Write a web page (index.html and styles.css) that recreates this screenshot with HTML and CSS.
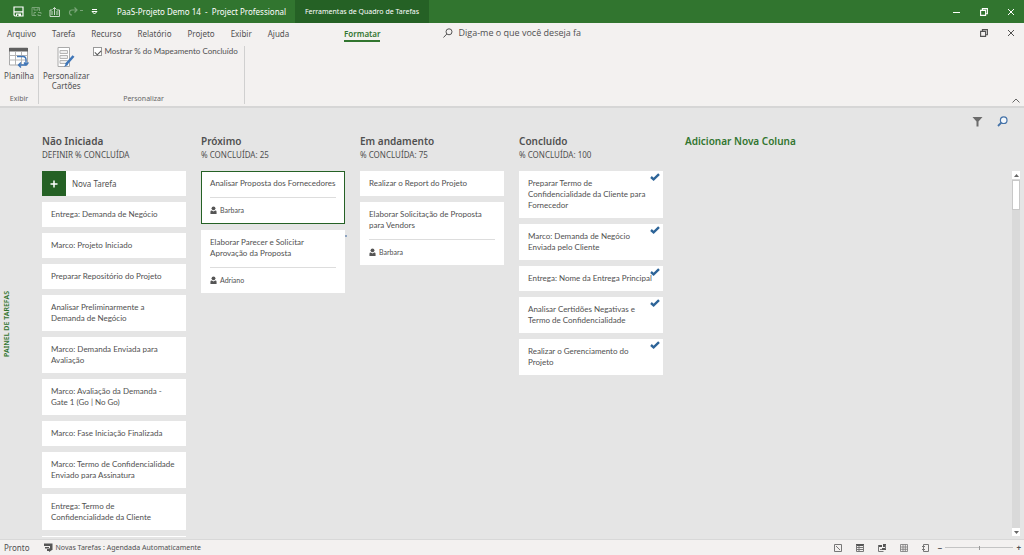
FILE: index.html
```html
<!DOCTYPE html>
<html lang="pt-BR">
<head>
<meta charset="utf-8">
<title>PaaS-Projeto Demo 14 - Project Professional</title>
<link rel="stylesheet" href="styles.css">
</head>
<body>
<svg class="defs" aria-hidden="true">
  <symbol id="person" viewBox="0 0 8 10"><circle cx="4" cy="2.500" r="2.200"/><path d="M.5 9V6.300Q.5 4.800 2.200 5L4 6 5.800 5Q7.500 4.800 7.500 6.300V9z"/></symbol>
  <symbol id="check" viewBox="0 0 10 8"><path d="M1 4 3.600 6.300 9 1.200" fill="none" stroke="#2d6498" stroke-width="2.400"/></symbol>
  <symbol id="restore" viewBox="0 0 8 8"><path d="M.6 2.400H5.600V7.400H.6zM2.400 2V.6H7.400V5.800H6" fill="none" stroke="currentColor" stroke-width="1.100"/></symbol>
  <symbol id="close" viewBox="0 0 8 8"><path d="M1 1 7 7M7 1 1 7" fill="none" stroke="currentColor"/></symbol>
</svg>
<header class="titlebar">
  <div class="quick">
    <button aria-label="Salvar"><svg width="11" height="11" viewBox="0 0 11 11"><path d="M1 1H10V10H2L1 9z" fill="none" stroke="#fff" stroke-width="1.200"/><path d="M1 5.200H10V6.500H1zM3 7.500H8V10H3z" fill="#fff"/><path d="M4 8.500H5.500V10H4z" fill="#31752f"/></svg></button>
    <button class="dim" aria-label="Salvar como"><svg width="11" height="11" viewBox="0 0 11 11" fill="none" stroke="#fff"><path d="M5 9.500H1V1.500H8.500V5M3 1.500V4H7V1.500M3 9V6.500H5M7 6.500H10V8M10 9.500H7V8"/></svg></button>
    <button class="soft" aria-label="Desfazer"><svg width="12" height="12" viewBox="0 0 12 12" fill="none" stroke="#fff"><path d="M3 4H1V10.500H10.500V4H8M5.500 9V1.500M3.500 3.500 5.500 1.500 7.500 3.500M2 6H4M7 6H9.500M2 8H4M7 8H9.500"/></svg></button>
    <button class="dim" aria-label="Refazer"><svg width="16" height="11" viewBox="0 0 16 11" fill="none" stroke="#fff"><path d="M9 4H4Q1.500 4 1.500 6.500T4 9M6.500 1.500 9 4 6.500 6.500M12 4.500H15" stroke-width="1.200"/></svg></button>
    <button aria-label="Personalizar acesso rápido"><svg width="7" height="6" viewBox="0 0 7 6" fill="none" stroke="#fff"><path d="M1 .5H6M1 2.500H6L3.500 5z"/></svg></button>
  </div>
  <span class="doc">PaaS-Projeto Demo 14 &nbsp;- &nbsp;Project Professional</span>
  <span class="context">Ferramentas de Quadro de Tarefas</span>
  <div class="winbtns">
    <button aria-label="Minimizar"><svg width="8" height="8"><path d="M0 4.500H7" stroke="currentColor"/></svg></button>
    <button aria-label="Restaurar"><svg width="8" height="8"><use href="#restore"/></svg></button>
    <button aria-label="Fechar"><svg width="8" height="8"><use href="#close"/></svg></button>
  </div>
</header>

<section class="ribbon">
  <div class="tabrow">
    <nav class="tabs">
      <a href="#">Arquivo</a><a href="#">Tarefa</a><a href="#">Recurso</a><a href="#">Relatório</a><a href="#">Projeto</a><a href="#">Exibir</a><a href="#">Ajuda</a>
    </nav>
    <a class="active" href="#">Formatar</a>
    <label class="tell"><svg width="10" height="10" viewBox="0 0 10 10" fill="none" stroke="#555"><circle cx="6" cy="3.800" r="3"/><path d="M3.800 6 .5 9.500"/></svg><input type="text" value="Diga-me o que você deseja fa" aria-label="Diga-me o que você deseja fazer"></label>
    <div class="winbtns">
      <button aria-label="Restaurar projeto"><svg width="8" height="8"><use href="#restore"/></svg></button>
      <button aria-label="Fechar projeto"><svg width="8" height="8"><use href="#close"/></svg></button>
    </div>
  </div>
  <div class="groups">
    <div class="group group-view">
      <button class="tool"><svg width="20" height="21" viewBox="0 0 20 21"><path d="M.5 1H18.500V18H.5z" fill="#fff" stroke="#aaa"/><path d="M0 1H19V4.500H0z" fill="#606060"/><path d="M.5 8.500H18.500M.5 13H18.500M6.500 5V18M12.500 5V18" stroke="#b5b5b5"/><path d="M8 9.500H14Q17 9.500 17 13V18H10M12 15.500 9.500 18 12 20.500M15 15.500 17 18 19.500 15.500" fill="none" stroke="#3f76b8" stroke-width="1.400"/></svg><span>Planilha</span></button>
      <span class="caption">Exibir</span>
    </div>
    <div class="group group-custom">
      <div class="tools">
        <button class="tool"><svg width="18" height="21" viewBox="0 0 18 21"><path d="M1 .5H12.500V19.500H1z" fill="#fff" stroke="#aaa"/><path d="M3 3.500H10.500V6.500H3zM3 8.500H10.500V11.500H3zM3 13.500H10.500V16.500H3z" fill="#eee" stroke="#b5b5b5"/><path d="M16.500 9 9 17.500" stroke="#3f76b8" stroke-width="2.600"/><path d="M9.500 15.500 7 20 11 18z" fill="#3f76b8"/></svg><span>Personalizar<br>Cartões</span></button>
        <label class="option"><input type="checkbox" checked>Mostrar % do Mapeamento Concluído</label>
      </div>
      <span class="caption">Personalizar</span>
    </div>
    <button class="collapse" aria-label="Recolher faixa"><svg width="8" height="5" viewBox="0 0 8 5"><path d="M.5 4.500 4 1 7.500 4.500" fill="none" stroke="#666"/></svg></button>
  </div>
</section>

<main class="workspace">
  <div class="pane"><span>PAINEL DE TAREFAS</span></div>
  <div class="board">
    <div class="boardtools">
      <button aria-label="Filtrar"><svg width="11" height="11" viewBox="0 0 11 11"><path d="M.5 1H10.500L6.500 5.500V10.500H4.500V5.500z" fill="#6c6c6c"/></svg></button>
      <button aria-label="Localizar"><svg width="11" height="11" viewBox="0 0 11 11"><circle cx="6.700" cy="4.200" r="3.300" fill="#f3f7fb" stroke="#4472a8" stroke-width="1.200"/><path d="M4.300 6.600 1 10" stroke="#4472a8" stroke-width="1.800"/></svg></button>
    </div>
    <div class="columns">
      <section class="column">
        <h2>Não Iniciada</h2><p class="sub">DEFINIR % CONCLUÍDA</p>
        <button class="new"><span class="plus"><svg width="8" height="8" viewBox="0 0 8 8"><path d="M4 .5V7.500M.5 4H7.500" stroke="#fff" stroke-width="1.500"/></svg></span>Nova Tarefa</button>
        <article class="card">Entrega: Demanda de Negócio</article>
        <article class="card">Marco: Projeto Iniciado</article>
        <article class="card">Preparar Repositório do Projeto</article>
        <article class="card">Analisar Preliminarmente a<br>Demanda de Negócio</article>
        <article class="card">Marco: Demanda Enviada para<br>Avaliação</article>
        <article class="card">Marco: Avaliação da Demanda -<br>Gate 1 (Go | No Go)</article>
        <article class="card">Marco: Fase Iniciação Finalizada</article>
        <article class="card">Marco: Termo de Confidencialidade<br>Enviado para Assinatura</article>
        <article class="card">Entrega: Termo de<br>Confidencialidade da Cliente</article>
        <article class="card">&nbsp;</article>
      </section>
      <section class="column">
        <h2>Próximo</h2><p class="sub">% CONCLUÍDA: 25</p>
        <article class="card selected">Analisar Proposta dos Fornecedores<p class="who"><svg width="7" height="9"><use href="#person"/></svg>Barbara</p></article>
        <article class="card">Elaborar Parecer e Solicitar<br>Aprovação da Proposta<p class="who"><svg width="7" height="9"><use href="#person"/></svg>Adriano</p><i class="speck"></i></article>
      </section>
      <section class="column">
        <h2>Em andamento</h2><p class="sub">% CONCLUÍDA: 75</p>
        <article class="card">Realizar o Report do Projeto</article>
        <article class="card">Elaborar Solicitação de Proposta<br>para Vendors<p class="who"><svg width="7" height="9"><use href="#person"/></svg>Barbara</p></article>
      </section>
      <section class="column">
        <h2>Concluído</h2><p class="sub">% CONCLUÍDA: 100</p>
        <article class="card">Preparar Termo de<br>Confidencialidade da Cliente para<br>Fornecedor<svg class="done" width="10" height="8"><use href="#check"/></svg></article>
        <article class="card">Marco: Demanda de Negócio<br>Enviada pelo Cliente<svg class="done" width="10" height="8"><use href="#check"/></svg></article>
        <article class="card">Entrega: Nome da Entrega Principal<svg class="done" width="10" height="8"><use href="#check"/></svg></article>
        <article class="card">Analisar Certidões Negativas e<br>Termo de Confidencialidade<svg class="done" width="10" height="8"><use href="#check"/></svg></article>
        <article class="card">Realizar o Gerenciamento do<br>Projeto<svg class="done" width="10" height="8"><use href="#check"/></svg></article>
      </section>
      <button class="addcol">Adicionar Nova Coluna</button>
      <div class="scroll">
        <button aria-label="Rolar para cima"><svg width="5" height="3"><path d="M0 3 2.500 0 5 3z"/></svg></button>
        <div class="thumb"></div>
        <button class="down" aria-label="Rolar para baixo"><svg width="5" height="3"><path d="M0 0 2.500 3 5 0z"/></svg></button>
      </div>
    </div>
  </div>
</main>

<footer class="status">
  <span>Pronto</span>
  <button class="mode"><svg width="9" height="9" viewBox="0 0 9 9"><path d="M0 .5H8.500V5H6V3H0zM1 4H5V5.500H1z" fill="#555"/><path d="M3 6H5V5L8 7 5 9V8H3z" fill="#555"/><path d="M6 5H8.500V7H6z" fill="#555"/></svg>Novas Tarefas : Agendada Automaticamente</button>
  <div class="views">
    <button aria-label="Gantt"><svg width="8" height="8" viewBox="0 0 8 8"><path d="M.5 .5H7.500V7.500H.5zM2 2 6 6" fill="none" stroke="#777"/></svg></button>
    <button aria-label="Uso da tarefa"><svg width="8" height="8" viewBox="0 0 8 8"><path d="M0 0H8V2H0z" fill="#555"/><path d="M.5 1V7.500H7.500V1M.5 3.500H7.500M.5 5.500H7.500M3 2V7.500" fill="none" stroke="#777"/></svg></button>
    <button aria-label="Planejador de equipe"><svg width="8" height="8" viewBox="0 0 8 8"><path d="M0 1H4V3H0zM5 0H8V3H5zM4 4H8V6H4z" fill="#555"/><path d="M.5 1V7.500H5.500M2 5.500H4M7.500 1V5" fill="none" stroke="#777"/></svg></button>
    <button aria-label="Planilha de recursos"><svg width="8" height="8" viewBox="0 0 8 8"><path d="M.5 .5H7.500V7.500H.5zM.5 3H7.500M.5 5.300H7.500M3 .5V7.500M5.300 .5V7.500" fill="none" stroke="#777" stroke-width=".8"/></svg></button>
    <button aria-label="Relatório"><svg width="8" height="8" viewBox="0 0 8 8"><path d="M1.500 .5H6.500V7.500H1.500zM0 2.500H3M0 5.500H3" fill="none" stroke="#777"/></svg></button>
  </div>
  <label class="zoom"><span>−</span><input type="range" min="0" max="100" value="50" aria-label="Zoom"><span>+</span></label>
</footer>
</body>
</html>
```
FILE: styles.css
```css
* { box-sizing: border-box; }
body {
  margin: 0;
  height: 100vh;
  display: flex;
  flex-direction: column;
  overflow: hidden;
  background: #e5e5e5;
  color: #505050;
  font: 8px/11px "Noto Sans", "Open Sans", sans-serif;
}
button, input { font: inherit; color: inherit; }
button { border: 0; padding: 0; background: none; display: flex; align-items: center; justify-content: center; }
a { color: inherit; text-decoration: none; }
h2, p { margin: 0; }
svg { display: block; flex: none; }
.defs { position: absolute; width: 0; height: 0; }

.titlebar { display: flex; flex: none; height: 23px; align-items: center; background: #31752f; color: #fff; }
.quick { display: flex; align-items: center; gap: 7px; width: 117px; padding-left: 13px; flex: none; }
.dim { opacity: .35; }
.soft { opacity: .75; }
.doc { width: 178px; white-space: nowrap; flex: none; }
.context { align-self: stretch; display: flex; align-items: center; justify-content: center; width: 134px; flex: none; background: #256125; font-size: 7px; white-space: nowrap; }
.winbtns { margin-left: auto; display: flex; gap: 19px; padding-right: 9px; }

.ribbon { flex: none; background: #f3f1f0; border-bottom: 2px solid #d6d6d6; }
.tabrow { display: flex; align-items: center; height: 20px; padding-left: 7px; }
.tabs { display: flex; gap: 16px; width: 337px; }
.active { color: #31752f; font-weight: 600; border-bottom: 2px solid #31752f; line-height: 12px; margin-top: 3px; }
.tell { display: flex; align-items: center; gap: 5px; margin-left: 63px; font: 9px/12px "Open Sans", sans-serif; }
.tell input { width: 150px; padding: 0; border: 0; background: none; outline: none; }
.groups { display: flex; height: 63px; padding-top: 3px; padding-bottom: 2px; }
.group { display: flex; flex-direction: column; justify-content: space-between; border-right: 1px solid #d0d0d0; }
.group-view { width: 39px; align-items: center; }
.group-custom { width: 206px; padding-left: 4px; }
.tools { display: flex; gap: 4px; align-items: flex-start; white-space: nowrap; }
.tool { flex-direction: column; gap: 3px; padding-top: 1px; line-height: 10px; text-align: center; }
.caption { font-size: 7px; text-align: center; color: #666; line-height: 10px; }
.option { display: flex; align-items: center; gap: 2px; font-family: Lato, sans-serif; }
.option input {
  appearance: none; width: 9px; height: 9px; margin: 0; border: 1px solid #999; background: #fff;
  display: grid; place-items: center;
}
.option input:checked::before { content: ""; width: 5px; height: 3px; border: solid #555; border-width: 0 0 1px 1px; transform: rotate(-45deg); }
.collapse { margin-left: auto; align-self: flex-end; padding: 0 4px 1px; }

.workspace { flex: 1; min-height: 0; display: flex; }
.pane { width: 14px; flex: none; display: flex; justify-content: center; }
.pane span { writing-mode: vertical-rl; transform: rotate(180deg); color: #31752f; font-size: 7px; line-height: 14px; font-weight: 600; margin-bottom: auto; padding-bottom: 183px; }
.board { flex: 1; min-width: 0; display: flex; flex-direction: column; }
.boardtools { display: flex; justify-content: flex-end; flex: none; gap: 14px; height: 26px; padding-right: 16px; }
.columns { flex: 1; min-height: 0; display: flex; gap: 15px; padding-left: 28px; overflow: hidden; margin-bottom: 2px; }
.column { width: 144px; flex: none; display: flex; flex-direction: column; gap: 6px; }
.column h2, .addcol { font-size: 10px; line-height: 15px; font-weight: 600; }
.column .sub { line-height: 12px; margin: -6px 0 4px; }
.card { position: relative; flex: none; background: #fff; padding: 7px 9px; white-space: nowrap; font-family: Lato, sans-serif; }
.selected { box-shadow: inset 0 0 0 1px #256125; padding-bottom: 8px; }
.who { display: flex; align-items: center; gap: 3px; margin-top: 8px; padding-top: 7px; border-top: 1px solid #ddd; font-size: 7px; }
.who svg { fill: #555; }
.done { position: absolute; top: 2px; right: 3px; }
.speck { position: absolute; top: 5px; right: -2px; width: 2px; height: 2px; background: #8da3c0; }
.new { flex: none; height: 25px; justify-content: flex-start; gap: 6px; background: #fff; }
.plus { width: 24px; align-self: stretch; display: grid; place-items: center; background: #256125; }
.addcol { align-self: flex-start; margin-left: 7px; color: #31752f; white-space: nowrap; }
.scroll { margin: 37px 4px 1px auto; width: 8px; flex: none; display: flex; flex-direction: column; background: #d9d9d9; }
.scroll svg { fill: #666; }
.scroll button { height: 8px; background: #fff; }
.thumb { height: 30px; margin-top: 1px; background: #fff; border: 1px solid #c8c8c8; }
.scroll .down { margin-top: auto; }

.status { flex: none; display: flex; align-items: center; height: 16px; padding: 0 3px 0 4px; background: #f3f1f0; border-top: 1px solid #d8d8d8; white-space: nowrap; }
.mode { margin-left: 14px; gap: 3px; font-size: 7px; }
.views { margin-left: auto; display: flex; gap: 14px; margin-right: 8px; }
.zoom { display: flex; align-items: center; gap: 3px; }
.zoom span { font-weight: 700; }
.zoom input { appearance: none; width: 68px; height: 8px; margin: 0; background: linear-gradient(#c4c4c4, #c4c4c4) center / 100% 1px no-repeat; }
.zoom input::-webkit-slider-thumb { appearance: none; width: 1px; height: 4px; background: #999; }
```
